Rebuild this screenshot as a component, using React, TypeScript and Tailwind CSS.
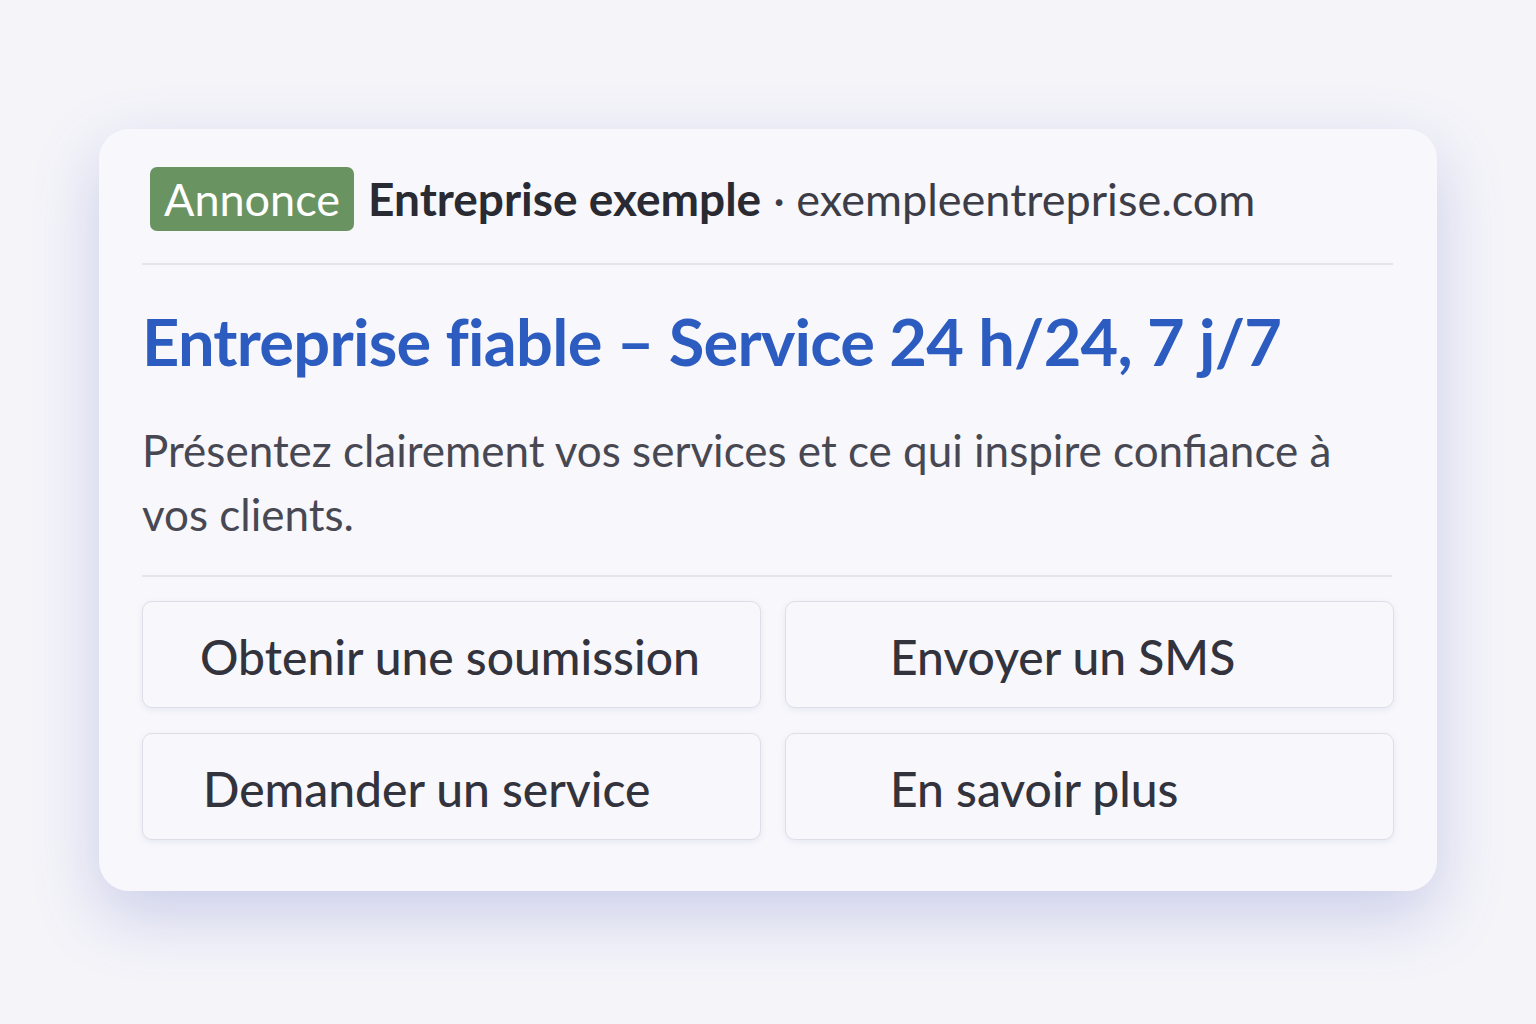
import React from 'react'

const actions = [
  { label: 'Obtenir une soumission', pad: 'pl-[57px]' },
  { label: 'Envoyer un SMS', pad: 'pl-[104px]' },
  { label: 'Demander un service', pad: 'pl-[60px]' },
  { label: 'En savoir plus', pad: 'pl-[104px]' },
]

export default function App() {
  return (
    <div
      className="min-h-screen w-full bg-[#f4f4f9] flex items-start justify-center pt-[129px]"
      style={{ fontFamily: 'Lato, "Noto Sans", sans-serif' }}
    >
      <div className="w-[1338px] h-[762px] rounded-[30px] bg-[#f7f7fc] shadow-[0_24px_64px_rgba(110,120,200,0.30)] px-[43px] pt-[38px]">
        {/* en-tête annonce */}
        <div className="flex items-center h-[64px] pl-[8px]">
          <span className="h-[64px] px-[14px] flex items-center rounded-[7px] bg-[#6a9362] text-white text-[45px] leading-none">
            Annonce
          </span>
          <span className="ml-[14px] text-[46px] font-bold text-[#2a2a33] leading-none">
            Entreprise exemple
          </span>
          <span className="ml-[12px] text-[45px] text-[#3d3d47] leading-none">
            · exempleentreprise.com
          </span>
        </div>

        <div className="mt-[32px] h-[2px] bg-[#e4e4ec] mr-[1px]" />

        <h1 className="mt-[44px] text-[65px] font-bold text-[#2d5cc0] leading-none tracking-[-0.75px]">
          Entreprise fiable – Service 24 h/24, 7 j/7
        </h1>

        <p className="mt-[44px] text-[44px] text-[#484853] leading-[64px]">
          Présentez clairement vos services et ce qui inspire confiance à vos clients.
        </p>

        <div className="mt-[29px] h-[2px] bg-[#e4e4ec] mr-[2px]" />

        <div className="mt-[24px] grid grid-cols-[619px_609px] gap-x-[24px] gap-y-[25px]">
          {actions.map((a) => (
            <div
              key={a.label}
              className={`h-[107px] flex items-center rounded-[10px] bg-[#f8f8fc] border border-[#dedee8] shadow-[0_2px_6px_rgba(120,120,170,0.12)] ${a.pad}`}
            >
              <span className="text-[48px] font-medium text-[#33333d] leading-none pt-[4px]">{a.label}</span>
            </div>
          ))}
        </div>
      </div>
    </div>
  )
}
